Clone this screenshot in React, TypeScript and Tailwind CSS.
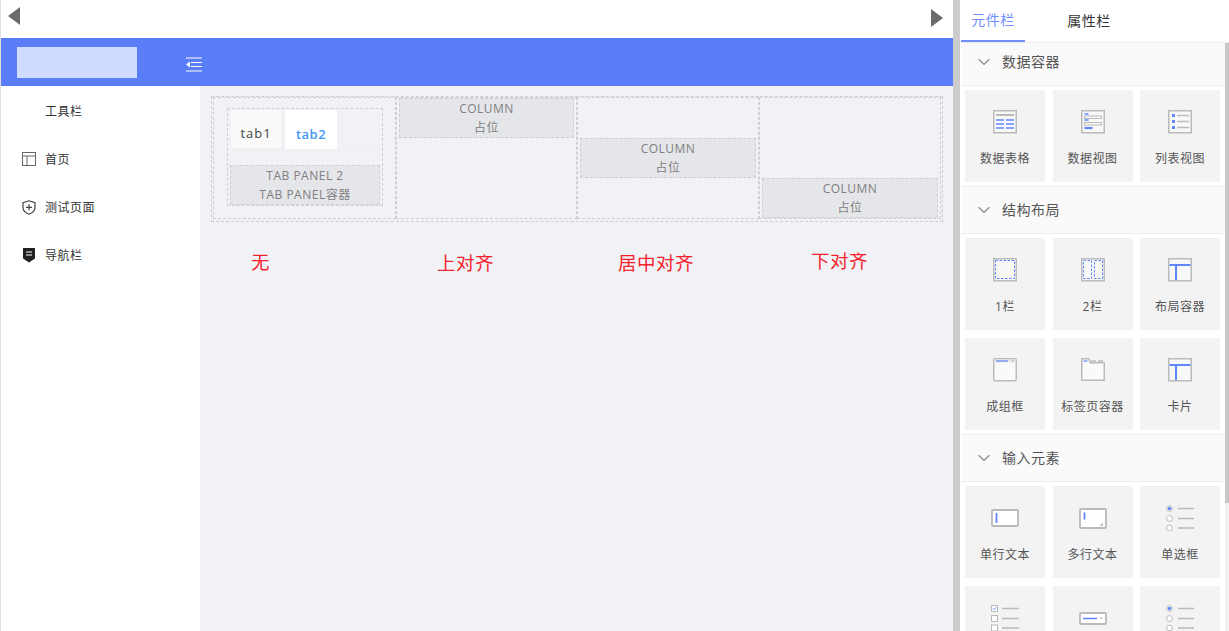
import type { ReactNode } from 'react';
import { ChevronDown } from 'lucide-react';

const G = '#bababa';
const B = '#5f85ff';

function Ico({ w = 24, h = 24, children }: { w?: number; h?: number; children: ReactNode }) {
  return (
    <svg width={w} height={h} viewBox={`0 0 ${w} ${h}`} fill="none">
      {children}
    </svg>
  );
}

const Frame = () => <rect x="0.75" y="0.75" width="22.5" height="22" fill="#f8f8f8" stroke={G} strokeWidth="1.5" />;

const icons: Record<string, ReactNode> = {
  table: (
    <Ico>
      <Frame />
      <path d="M3 5h18" stroke={G} strokeWidth="2" />
      <path d="M3 10h8M13 10h8M3 14h8M13 14h8M3 18h8M13 18h8" stroke={B} strokeWidth="1.4" />
    </Ico>
  ),
  form: (
    <Ico>
      <Frame />
      <path d="M3.500 4h4M3.500 10h4" stroke={B} strokeWidth="1.400" />
      <rect x="3.500" y="6" width="17" height="2.500" stroke={G} />
      <rect x="3.500" y="12.500" width="17" height="2.500" stroke={G} />
      <path d="M3.500 18h8" stroke={B} strokeWidth="2.200" />
    </Ico>
  ),
  list: (
    <Ico>
      <Frame />
      <path d="M4 4h3v3H4zM4 10h3v3H4zM4 16h3v3H4z" fill={B} />
      <path d="M9 5.500h12M9 11.500h12M9 17.500h12" stroke={G} strokeWidth="1.600" />
    </Ico>
  ),
  col1: (
    <Ico>
      <Frame />
      <rect x="2.500" y="2.500" width="19" height="18" stroke={B} strokeDasharray="2.500 1.500" />
    </Ico>
  ),
  col2: (
    <Ico>
      <Frame />
      <rect x="2.500" y="2.500" width="8" height="18" stroke={B} strokeDasharray="2.500 1.500" />
      <rect x="13.500" y="2.500" width="8" height="18" stroke={B} strokeDasharray="2.500 1.500" />
    </Ico>
  ),
  layout: (
    <Ico>
      <Frame />
      <path d="M1.500 7h21M8 8v14" stroke={B} strokeWidth="2" />
    </Ico>
  ),
  group: (
    <Ico>
      <rect x="0.750" y="0.750" width="22.500" height="22" rx="1.500" fill="#fafafa" stroke={G} strokeWidth="1.500" />
      <path d="M1.500 1.500h21v3h-21z" fill="#e8e8e8" />
      <path d="M3 3h12" stroke={B} strokeWidth="1.200" />
      <path d="M18.500 3h2.500" stroke={G} strokeWidth="1.200" />
    </Ico>
  ),
  tabs: (
    <Ico>
      <path d="M0.750 22.250V0.750h7l1.500 4h14v17.500z" fill="#fafafa" stroke={G} strokeWidth="1.500" />
      <path d="M2.500 3h4" stroke={B} strokeWidth="1.200" />
      <path d="M10 3h5M17 3h5" stroke={G} strokeWidth="1.600" />
    </Ico>
  ),
  input: (
    <Ico w={28} h={18}>
      <rect x="1" y="1" width="26" height="16" rx="1" fill="#fff" stroke={G} strokeWidth="1.800" />
      <path d="M5.500 4v10" stroke={B} strokeWidth="1.800" />
    </Ico>
  ),
  textarea: (
    <Ico w={28} h={21}>
      <rect x="1" y="1" width="26" height="19" rx="1" fill="#fff" stroke={G} strokeWidth="1.800" />
      <path d="M5.500 4.500v7" stroke={B} strokeWidth="1.800" />
      <path d="M24 14.500v3.500h-3.500z" fill={G} />
    </Ico>
  ),
  radio: (
    <Ico w={28} h={26}>
      <circle cx="3.500" cy="3.500" r="2.900" fill="#fff" stroke={G} />
      <circle cx="3.500" cy="3.500" r="1.800" fill={B} />
      <circle cx="3.500" cy="13.500" r="2.900" fill="#fff" stroke={G} />
      <circle cx="3.500" cy="23" r="2.900" fill="#fff" stroke={G} />
      <path d="M12 3.500h16M12 13.500h16M12 23h16" stroke={G} strokeWidth="1.600" />
    </Ico>
  ),
  check: (
    <Ico w={28} h={26}>
      <rect x="0.500" y="0.500" width="6" height="6" fill="#fff" stroke={G} />
      <path d="M2 3.500l1.200 1.200 2-2.500" stroke={B} />
      <rect x="0.500" y="10.500" width="6" height="6" fill="#fff" stroke={G} />
      <rect x="0.500" y="20" width="6" height="6" fill="#fff" stroke={G} />
      <path d="M11 3.500h17M11 13.500h17M11 23h17" stroke={G} strokeWidth="1.600" />
    </Ico>
  ),
  select: (
    <Ico w={28} h={13}>
      <rect x="1" y="1" width="26" height="11" rx="1" fill="#fff" stroke={G} strokeWidth="1.800" />
      <path d="M4 6.500h14" stroke={B} strokeWidth="1.500" />
      <path d="M20.500 5.500h3.500l-1.750 2z" fill={G} />
    </Ico>
  ),
};

function Card({ icon, label }: { icon: string; label: string }) {
  return (
    <div className="flex h-[92px] w-[80px] flex-col items-center bg-[#f3f3f3] pt-[20px]">
      <div className="flex h-[24px] items-center">{icons[icon]}</div>
      <div className="mt-[15px] text-[12px] leading-[20px] text-[#555]">{label}</div>
    </div>
  );
}

function Section({ title, first, children }: { title: string; first?: boolean; children: ReactNode }) {
  return (
    <div>
      <div
        className={
          first
            ? 'flex h-[43px] items-center border-b border-[#eeeeee] bg-[#fafafa] pb-[4px] pl-[13px] text-[14px] text-[#555]'
            : 'flex h-[48px] items-center border-y border-[#eeeeee] bg-[#fafafa] pl-[13px] text-[14px] text-[#555]'
        }
      >
        <ChevronDown size={20} strokeWidth={1.2} className="mr-[8px] text-[#333]" />
        <span className="-translate-y-[1px]">{title}</span>
      </div>
      <div className="grid grid-cols-[80px_80px_80px] gap-x-[7.5px] gap-y-[8px] bg-white py-[4px] pl-[4px]">
        {children}
      </div>
    </div>
  );
}

function Placeholder({ title, sub }: { title: string; sub: string }) {
  return (
    <div className="flex h-[40px] flex-col items-center justify-center border border-dashed border-[#cfcfcf] bg-[#e5e6ea] text-[12px] leading-[19.5px] text-[#808080]">
      <div>{title}</div>
      <div>{sub}</div>
    </div>
  );
}

function Column({ className }: { className: string }) {
  return (
    <div className={`flex flex-col border border-dashed border-[#cfcfcf] px-[2px] ${className}`}>
      <Placeholder title="COLUMN" sub="占位" />
    </div>
  );
}

function NavItem({ icon, label }: { icon?: ReactNode; label: string }) {
  return (
    <div className="flex h-[48px] items-center pl-[21px] text-[12px] text-[#333]">
      <div className="flex w-[23px] items-center">{icon}</div>
      <span className="translate-y-[1px]">{label}</span>
    </div>
  );
}

export default function App() {
  return (
    <div
      className="flex h-[631px] w-[1229px] overflow-hidden bg-white tracking-[0.5px]"
      style={{ fontFamily: '"Open Sans", "Noto Sans CJK SC", sans-serif' }}
    >
      <div className="flex w-[953px] flex-col border-l border-[#dddddd]">
        <div className="flex h-[38px] items-start justify-between pl-[7px] pr-[10px]">
          <svg width="12" height="18" viewBox="0 0 12 18" className="mt-[7px]">
            <path d="M12 0v18L0 9z" fill="#6b6b6b" />
          </svg>
          <svg width="12" height="18" viewBox="0 0 12 18" className="mt-[9px]">
            <path d="M0 0v18l12-9z" fill="#6b6b6b" />
          </svg>
        </div>
        <div className="flex h-[48px] items-center bg-[#597ef7] pl-[16px]">
          <div className="h-[31px] w-[120px] bg-[#d0dbff]" />
          <svg width="16" height="15" viewBox="0 0 16 15" className="ml-[49px] mt-[5px]">
            <path d="M0 1h16M5 5.500h11M5 9.500h11M0 14h16" stroke="#fff" strokeWidth="1.200" />
            <path d="M4 4.500v6L0 7.500z" fill="#fff" />
          </svg>
        </div>
        <div className="flex flex-1">
          <div className="w-[199px] bg-white pt-[1px]">
            <NavItem label="工具栏" />
            <NavItem
              label="首页"
              icon={
                <svg width="14" height="14" viewBox="0 0 14 14" fill="none" stroke="#666">
                  <rect x="0.500" y="0.500" width="13" height="13" />
                  <path d="M0.500 4h13M5 4v9.500" />
                </svg>
              }
            />
            <NavItem
              label="测试页面"
              icon={
                <svg width="14" height="15" viewBox="0 0 14 15" fill="none" stroke="#444" strokeWidth="1.200">
                  <path d="M7 .8l6 2v5c0 3-2.500 5-6 6.400C3.500 12.800 1 10.800 1 7.800v-5z" />
                  <path d="M4 7.300h6M7 4.300v6" />
                </svg>
              }
            />
            <NavItem
              label="导航栏"
              icon={
                <svg width="14" height="15" viewBox="0 0 14 15">
                  <path d="M1 0h12v10.500l-6 4-6-4z" fill="#222" />
                  <path d="M4 4h6M4 7h6" stroke="#fff" strokeWidth="1.200" />
                </svg>
              }
            />
          </div>
          <div className="flex-1 bg-[#f0f2f5] pl-[11px] pt-[10px]">
            <div className="flex h-[126px] w-[732px] border border-dashed border-[#cfcfcf] px-[1px] pb-[2px]">
              <div className="w-[183px] border border-dashed border-[#cfcfcf] pl-[13px] pt-[10px]">
                <div className="h-[98px] w-[156px] border border-dashed border-[#cfcfcf] px-[2px] pt-[1px]">
                  <div className="flex h-[39px] gap-[4px] border-b border-[#eeeeee] pl-[1px]">
                    <div className="flex h-[38px] w-[50px] items-center justify-center bg-[#fafafa] pt-[10px] text-[13px] tracking-[1px] text-[#444]">
                      tab1
                    </div>
                    <div className="flex h-[39px] w-[52px] items-center justify-center bg-white pt-[10px] text-[13px] font-semibold text-[#3f97f8]">
                      tab2
                    </div>
                  </div>
                  <div className="mt-[16px]">
                    <Placeholder title="TAB PANEL 2" sub="TAB PANEL容器" />
                  </div>
                </div>
              </div>
              <Column className="w-[181px] justify-start" />
              <Column className="w-[182px] justify-center" />
              <Column className="w-[182px] justify-end" />
            </div>
            <div className="mt-[27px] flex text-[18.5px] leading-[28px] text-[#f5222d]">
              <span className="ml-[40px] -translate-y-[1px]">无</span>
              <span className="ml-[167px]">上对齐</span>
              <span className="ml-[124px]">居中对齐</span>
              <span className="ml-[117px] -translate-y-[2px]">下对齐</span>
            </div>
          </div>
        </div>
      </div>
      <div className="w-[7px] bg-[#cccccc]" />
      <div className="flex w-[269px] flex-col">
        <div className="flex h-[43px] border-b border-[#eeeeee] bg-white pl-[1px] text-[14px]">
          <div className="flex h-[42px] w-[64px] items-center justify-center border-b-2 border-[#6f8fff] pb-[2px] text-[#6f8fff]">
            元件栏
          </div>
          <div className="flex h-[42px] w-[128px] items-center justify-center pb-[2px] text-[#333]">属性栏</div>
        </div>
        <div className="flex min-h-0 flex-1">
          <div className="flex-1 overflow-hidden pl-[1px]">
            <Section title="数据容器" first>
              <Card icon="table" label="数据表格" />
              <Card icon="form" label="数据视图" />
              <Card icon="list" label="列表视图" />
            </Section>
            <Section title="结构布局">
              <Card icon="col1" label="1栏" />
              <Card icon="col2" label="2栏" />
              <Card icon="layout" label="布局容器" />
              <Card icon="group" label="成组框" />
              <Card icon="tabs" label="标签页容器" />
              <Card icon="layout" label="卡片" />
            </Section>
            <Section title="输入元素">
              <Card icon="input" label="单行文本" />
              <Card icon="textarea" label="多行文本" />
              <Card icon="radio" label="单选框" />
              <Card icon="check" label="" />
              <Card icon="select" label="" />
              <Card icon="radio" label="" />
            </Section>
          </div>
          <div className="w-[4px] bg-[#f1f1f1]">
            <div className="h-[460px] bg-[#c8c8c8]" />
          </div>
        </div>
      </div>
    </div>
  );
}
